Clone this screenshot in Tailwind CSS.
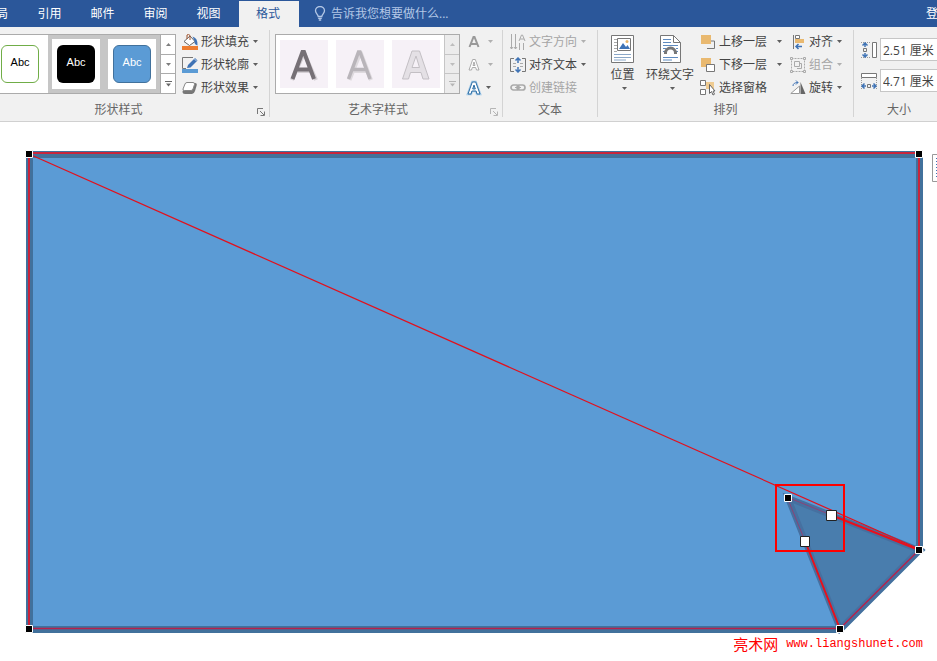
<!DOCTYPE html>
<html lang="zh-CN">
<head>
<meta charset="utf-8">
<title>格式</title>
<script src="https://cdn.jsdelivr.net/npm/@tailwindcss/browser@4"></script>
</head>
<body class="flex min-h-screen flex-col overflow-x-hidden bg-white font-['Open_Sans','Noto_Sans_CJK_SC',sans-serif] text-xs leading-4 text-[#444444]">
<svg class="hidden">
  <symbol id="caret" viewBox="0 0 5 3"><path d="M0 0h5L2.500 3z" fill="currentColor" opacity=".85"/></symbol>
  <symbol id="more" viewBox="0 0 7 6"><path d="M0 .5h7" stroke="currentColor"/><path d="M1 2.500h5L3.500 5.500z" fill="currentColor"/></symbol>
  <symbol id="launcher" viewBox="0 0 8 8"><path d="M.5 6V.5H6M3 3l4 4M7.500 3.500v4h-4" fill="none" stroke="currentColor"/></symbol>
</svg>

<nav class="flex h-[27px] items-stretch overflow-hidden bg-[#2b579a] text-white">
  <a href="#" class="-ml-1 flex w-7 items-center">局</a>
  <a href="#" class="flex w-[53px] items-center justify-center pr-0.5">引用</a>
  <a href="#" class="flex w-[53px] items-center justify-center pr-0.5">邮件</a>
  <a href="#" class="flex w-[53px] items-center justify-center pr-0.5">审阅</a>
  <a href="#" class="flex w-[53px] items-center justify-center pr-0.5">视图</a>
  <a href="#" class="mt-px ml-[3px] flex w-[60px] items-center justify-center bg-[#f1f1f1] pr-0.5 pb-px text-[#2b579a]">格式</a>
  <button class="ml-[15px] flex items-center gap-[5px] text-[#b3c7e6]">
    <svg class="h-[15px] w-3" viewBox="0 0 12 15" fill="none" stroke="currentColor" stroke-width="1.300"><path d="M4.200 10.500C4.200 8.500 1.500 7.500 1.500 4.800a4.500 4.300 0 0 1 9 0c0 2.700-2.700 3.700-2.700 5.700zM4.200 12.300h3.600M4.800 14h2.400"/></svg>
    <span>告诉我您想要做什么...</span>
  </button>
  <a href="#" class="ml-auto flex w-[11px] items-center overflow-hidden whitespace-nowrap">登</a>
</nav>

<header class="flex h-[95px] overflow-hidden border-b border-[#d0d0d0] bg-[#f1f1f1] whitespace-nowrap">
  <section class="mt-[3px] mb-1 flex w-[270px] shrink-0 flex-col border-r border-[#d4d4d4]">
    <div class="flex h-[69px] shrink-0">
      <div class="mt-1 flex h-[60px] w-[176px] shrink-0 border border-l-0 border-[#ababab] bg-white font-['Liberation_Sans',sans-serif] text-[11px]">
        <div class="flex w-[161px] justify-end overflow-hidden">
          <button class="flex h-[58px] w-14 shrink-0 items-center justify-center"><span class="flex size-[38px] items-center justify-center rounded-md border border-[#70ad47] pb-1 text-black">Abc</span></button>
          <button class="flex h-[58px] w-14 shrink-0 items-center justify-center border-4 border-[#c6c6c6]"><span class="flex size-[38px] items-center justify-center rounded-md bg-black pb-1 text-white">Abc</span></button>
          <button class="flex h-[58px] w-14 shrink-0 items-center justify-center border-4 border-[#c6c6c6]"><span class="flex size-[38px] items-center justify-center rounded-md border border-[#41719c] bg-[#5b9bd5] pb-1 text-white">Abc</span></button>
        </div>
        <div class="flex w-[15px] flex-col divide-y divide-[#ababab] border-l border-[#ababab] text-[#666666]">
          <button aria-label="上一行" class="flex flex-1 items-center justify-center"><svg class="h-[3px] w-[5px] rotate-180"><use href="#caret"/></svg></button>
          <button aria-label="下一行" class="flex flex-1 items-center justify-center"><svg class="h-[3px] w-[5px]"><use href="#caret"/></svg></button>
          <button aria-label="其他" class="flex flex-1 items-center justify-center"><svg class="h-[6px] w-[7px]"><use href="#more"/></svg></button>
        </div>
      </div>
      <div class="ml-1.5 flex flex-col">
        <button class="flex h-[23px] items-center gap-[3px]">
          <svg class="size-4" viewBox="0 0 16 16"><path d="M2 7.500l6-5.500 5 5.500-5.500 4z" fill="#fff" stroke="#666"/><path d="M5 5V1Q6.500-.5 8 1.500V6" fill="none" stroke="#a0522d"/><path d="M10.500 2.500q5.500 1.500 5 9-3.500-1-3-4.500z" fill="#3f73b5"/><path d="M0 12h16v4H0z" fill="#ed7d31"/></svg>
          <span>形状填充</span><svg class="ml-px h-[3px] w-[5px]"><use href="#caret"/></svg>
        </button>
        <button class="flex h-[23px] items-center gap-[3px]">
          <svg class="size-4" viewBox="0 0 16 16"><path d="M11 .5H.5v11H4" fill="none" stroke="#777"/><path d="M6 8l7-7 2.500 2.500-7 7L5 11z" fill="#3f73b5"/><path d="M12 1.500l2.500 2.500" stroke="#fff" stroke-width=".7"/><path d="M0 12h16v4H0z" fill="#5b9bd5"/></svg>
          <span>形状轮廓</span><svg class="ml-px h-[3px] w-[5px]"><use href="#caret"/></svg>
        </button>
        <button class="flex h-[23px] items-center gap-[3px]">
          <svg class="size-4" viewBox="0 0 16 16"><path d="M5 3h8q2.500 0 1.500 3L13 11q-1 3-3 3H3q-2.500 0-2.500-2.500z" fill="#777"/><path d="M5 2.500h6q2 0 1.500 2L11 9q-.6 1.500-2 1.500H2.500Q.5 10.500 1 9L3 4q.5-1.500 2-1.500z" fill="#fff" stroke="#888"/></svg>
          <span>形状效果</span><svg class="ml-px h-[3px] w-[5px]"><use href="#caret"/></svg>
        </button>
      </div>
    </div>
    <div class="flex items-center pt-[3px]"><h2 class="flex-1 text-center text-[#666666]"><span class="pr-7">形状样式</span></h2><button aria-label="形状样式设置" class="mt-1 -ml-2 pr-1 text-[#777777]"><svg class="size-2"><use href="#launcher"/></svg></button></div>
  </section>

  <section class="mt-[3px] mb-1 flex w-[233px] shrink-0 flex-col border-r border-[#d4d4d4]">
    <div class="flex h-[69px] shrink-0">
      <div class="mt-1 ml-[5px] flex h-[60px] w-[185px] shrink-0 border border-[#ababab] bg-white font-['Open_Sans',sans-serif]">
        <div class="flex w-[169px] items-center gap-2 pl-1">
          <button aria-label="填充 深灰" class="flex size-12 shrink-0 items-center justify-center bg-[#f6f1f7]"><svg class="size-9" viewBox="0 0 36 36"><path d="M6 34L17.500 8h1L30 34M11.500 25h13" fill="none" stroke="#d5d0d5" stroke-width="4"/><path d="M6.500 33L16.500 6h1.500L28 33M10 23.500h15" fill="none" stroke="#767076" stroke-width="4"/></svg></button>
          <button aria-label="填充 浅灰" class="flex size-12 shrink-0 items-center justify-center bg-[#f6f1f7]"><svg class="size-9" viewBox="0 0 36 36"><path d="M7.500 34L18 7.500h1L29 34M11.500 25h15" fill="none" stroke="#dedade" stroke-width="4"/><path d="M6.500 33L16.500 6h1.500L28 33M10 23.500h15" fill="none" stroke="#b9b5ba" stroke-width="3.500"/></svg></button>
          <button aria-label="轮廓" class="flex size-12 shrink-0 items-center justify-center bg-[#f6f1f7]"><svg class="size-9" viewBox="0 0 36 36"><path d="M4.500 33L14 5h7.500L31 33h-6l-2-6.500H12.500L10.500 33zM14 21.500h7.500L18 10z" fill="#e4e0e5" stroke="#c3bfc4"/></svg></button>
        </div>
        <div class="flex w-[15px] flex-col divide-y divide-[#c6c6c6] border-l border-[#c6c6c6] bg-[#ececec] text-[#b5b5b5]">
          <button aria-label="上一行" class="flex flex-1 items-center justify-center"><svg class="h-[3px] w-[5px] rotate-180"><use href="#caret"/></svg></button>
          <button aria-label="下一行" class="flex flex-1 items-center justify-center"><svg class="h-[3px] w-[5px]"><use href="#caret"/></svg></button>
          <button aria-label="其他" class="flex flex-1 items-center justify-center"><svg class="h-[6px] w-[7px]"><use href="#more"/></svg></button>
        </div>
      </div>
      <div class="ml-1.5 flex flex-col text-[#a5a5a5]">
        <button aria-label="文本填充" class="flex h-[23px] items-center gap-1.5"><svg class="size-4" viewBox="0 0 16 16"><path d="M3.500 13L7.500 3h1l4 10M5 10h6" fill="none" stroke="#999" stroke-width="2"/></svg><svg class="h-[3px] w-[5px]"><use href="#caret"/></svg></button>
        <button aria-label="文本轮廓" class="flex h-[23px] items-center gap-1.5"><svg class="size-4" viewBox="0 0 16 16"><path d="M3 13L6.700 2.500h2.600L13 13h-2.500l-.8-2.500H6.300L5.500 13zM7 8.500h2L8 5z" fill="#fff" stroke="#999" stroke-width=".8"/></svg><svg class="h-[3px] w-[5px]"><use href="#caret"/></svg></button>
        <button aria-label="文本效果" class="flex h-[23px] items-center gap-1 text-[#444444]"><svg class="size-4" viewBox="0 0 16 16"><path d="M2 14L6.300 2h3.400L14 14h-3l-.9-3H5.900L5 14zM6.700 9h2.600L8 5z" fill="#fff" stroke="#a5cbe8" stroke-width="2.500"/><path d="M2 14L6.300 2h3.400L14 14h-3l-.9-3H5.900L5 14zM6.700 9h2.600L8 5z" fill="#fff" stroke="#2c6da4"/></svg><svg class="h-[3px] w-[5px]"><use href="#caret"/></svg></button>
      </div>
    </div>
    <div class="flex items-center pt-[3px]"><h2 class="flex-1 text-center text-[#666666]"><span class="pr-3">艺术字样式</span></h2><button aria-label="艺术字样式设置" class="mt-1 -ml-2 pr-1 text-[#b5b5b5]"><svg class="size-2"><use href="#launcher"/></svg></button></div>
  </section>

  <section class="mt-[3px] mb-1 flex w-[95px] shrink-0 flex-col border-r border-[#d4d4d4]">
    <div class="flex h-[69px] shrink-0 flex-col pl-[7px]">
      <button class="flex h-[23px] items-center gap-[3px] text-[#a5a5a5]">
        <svg class="size-4" viewBox="0 0 16 16" fill="none" stroke="#aaa"><path d="M1.500 0v15M0 13l1.500 2L3 13M5.500 0v15M4 13l1.500 2L7 13M9 7l2.500-6h1L15 7M10 5h4M9.500 9v7M13.500 9v7" /></svg>
        <span>文字方向</span><svg class="ml-px h-[3px] w-[5px]"><use href="#caret"/></svg>
      </button>
      <button class="flex h-[23px] items-center gap-[3px]">
        <svg class="size-4" viewBox="0 0 16 16" fill="none"><path d="M4 1.500H.5v13H4M12 1.500h3.500v13H12" stroke="#777"/><path d="M3 6.500h3M10 6.500h3M3 9.500h3M10 9.500h3" stroke="#aaa"/><path d="M8 1v5M5.500 3.500L8 1l2.500 2.500M8 15v-5M5.500 12.500L8 15l2.500-2.500" stroke="#3f73b5" stroke-width="1.500"/></svg>
        <span>对齐文本</span><svg class="ml-px h-[3px] w-[5px]"><use href="#caret"/></svg>
      </button>
      <button class="flex h-[23px] items-center gap-[3px] text-[#a5a5a5]">
        <svg class="size-4" viewBox="0 0 16 16" fill="none" stroke="#aaa" stroke-width="1.700"><rect x="1" y="5" width="8" height="5" rx="2.500"/><rect x="7" y="5" width="8" height="5" rx="2.500"/><path d="M5 7.500h6" stroke-width="1"/></svg>
        <span>创建链接</span>
      </button>
    </div>
    <h2 class="pt-[3px] text-center text-[#666666]">文本</h2>
  </section>

  <section class="mt-[3px] mb-1 flex w-64 shrink-0 flex-col border-r border-[#d4d4d4]">
    <div class="flex h-[69px] shrink-0">
      <button class="flex w-[49px] flex-col items-center pt-[5px]">
        <svg class="h-7 w-[23px]" viewBox="0 0 23 28" fill="none"><path d="M.5.5h22v27H.5z" fill="#fff" stroke="#777"/><path d="M3 4.500h3M3 7.500h3M3 10.500h3M3 13.500h3M3 16.500h3" stroke="#aaa"/><path d="M3 19.500h17M3 22.500h17M3 25h12" stroke="#8aa7c8"/><path d="M6.500 3.500h13v12h-13z" fill="#fff" stroke="#777"/><path d="M8 14l4-6 3 4 1.500-2 2.500 4z" fill="#3f73b5"/><circle cx="16" cy="6.500" r="1.500" fill="#e8b66a"/></svg>
        <span class="mt-1">位置</span><svg class="mt-1 ml-1 h-[3px] w-[5px]"><use href="#caret"/></svg>
      </button>
      <button class="flex w-[46px] flex-col items-center pt-[5px]">
        <svg class="h-7 w-[21px]" viewBox="0 0 21 28" fill="none"><path d="M.5.5h13l7 7v20H.5z" fill="#fff" stroke="#777"/><path d="M13.500.5v7h7" stroke="#777"/><path d="M3 4.500h8M3 7.500h8M3 10.500h15M3 13.500h3M16 13.500h2M3 16.500h2M16 16.500h2M3 22.500h15M3 25h9" stroke="#5f8bc0"/><path d="M5.500 19v-1a5 5 0 0 1 10 0v1" stroke="#777" stroke-width="3"/></svg>
        <span class="mt-1">环绕文字</span><svg class="mt-1 ml-1 h-[3px] w-[5px]"><use href="#caret"/></svg>
      </button>
      <div class="ml-[7px] flex w-[90px] flex-col">
        <button class="flex h-[23px] items-center gap-[3px]">
          <svg class="size-4" viewBox="0 0 16 16"><path d="M7 14.500h7.500V7H11" fill="none" stroke="#777"/><path d="M1 1h10v9H1z" fill="#e9b970"/></svg>
          <span>上移一层</span><svg class="ml-[7px] h-[3px] w-[5px]"><use href="#caret"/></svg>
        </button>
        <button class="flex h-[23px] items-center gap-[3px]">
          <svg class="size-4" viewBox="0 0 16 16"><path d="M1 1h10v9H1z" fill="#e9b970"/><path d="M6.500 7.500h8v7h-8z" fill="#fff" stroke="#777"/></svg>
          <span>下移一层</span><svg class="ml-[7px] h-[3px] w-[5px]"><use href="#caret"/></svg>
        </button>
        <button class="flex h-[23px] items-center gap-[3px]">
          <svg class="size-4" viewBox="0 0 16 16"><path d="M6 2h8v7H6z" fill="#efcb91"/><path d="M.5.5h5v5h-5zM.5 9.500h5v5h-5z" fill="#fff" stroke="#777"/><path d="M9.500 4.500v9l2-2 1.500 3.500 1.500-.8-1.500-3.200H15z" fill="#fff" stroke="#666"/></svg>
          <span>选择窗格</span>
        </button>
      </div>
      <div class="flex flex-col">
        <button class="flex h-[23px] items-center gap-[3px]">
          <svg class="size-4" viewBox="0 0 16 16" fill="none"><path d="M3.500 1v14" stroke="#777"/><path d="M5.500 1.500h4v3h-4z" fill="#fff" stroke="#777"/><path d="M5 5h9v4H5z" fill="#e9b970"/><path d="M6 12.500h6M8.500 10L6 12.500 8.500 15" stroke="#3f73b5" stroke-width="1.500"/></svg>
          <span>对齐</span><svg class="ml-px h-[3px] w-[5px]"><use href="#caret"/></svg>
        </button>
        <button class="flex h-[23px] items-center gap-[3px] text-[#a5a5a5]">
          <svg class="size-4" viewBox="0 0 16 16" fill="none" stroke="#aaa"><path d="M1.500 1.500h13v13h-13z" stroke-dasharray="2 1"/><path d="M4.500 4.500h5v5h-5zM7 11.500h4.500V6.500H9.500"/><path d="M.5.500h2v2h-2zM13.500.500h2v2h-2zM.5 13.500h2v2h-2zM13.500 13.500h2v2h-2z" fill="#f1f1f1"/></svg>
          <span>组合</span><svg class="ml-px h-[3px] w-[5px]"><use href="#caret"/></svg>
        </button>
        <button class="flex h-[23px] items-center gap-[3px]">
          <svg class="size-4" viewBox="0 0 16 16" fill="none"><path d="M.8 13.500h8.700V6z" fill="#fff" stroke="#999"/><path d="M10.500 2L15.500 14h-5z" fill="#666"/><path d="M3 6q0-3.500 5-3.500M6 .5l2 2-2 2" stroke="#3f73b5"/></svg>
          <span>旋转</span><svg class="ml-px h-[3px] w-[5px]"><use href="#caret"/></svg>
        </button>
      </div>
    </div>
    <h2 class="pt-[3px] text-center text-[#666666]">排列</h2>
  </section>

  <section class="mt-[3px] mb-1 flex min-w-0 flex-1 flex-col pl-[7px]">
    <div class="flex h-[69px] shrink-0 flex-col gap-2 pt-2">
      <div class="flex h-[23px] shrink-0 items-center gap-[3px]">
        <label for="shape-height" aria-label="高度" class="shrink-0"><svg class="size-4" viewBox="0 0 16 16" fill="none"><path d="M11.500.5h4v15h-4z" fill="#fff" stroke="#777"/><path d="M0 .5h10M0 15.500h10" stroke="#999" stroke-dasharray="1 1"/><path d="M2.500 6.500h3v3h-3z" stroke="#777"/><path d="M4 1v4M1.500 3.500L4 1l2.500 2.500M4 15v-4M1.500 12.500L4 15l2.500-2.500" stroke="#3f73b5" stroke-width="1.500"/></svg></label>
        <input id="shape-height" value="2.51 厘米" class="h-[23px] min-w-0 flex-1 border border-r-0 border-[#c6c6c6] bg-white pl-0.5">
      </div>
      <div class="flex h-[23px] shrink-0 items-center gap-[3px]">
        <label for="shape-width" aria-label="宽度" class="shrink-0"><svg class="size-4" viewBox="0 0 16 16" fill="none"><path d="M.5.5h15v4H.5z" fill="#fff" stroke="#777"/><path d="M.5 5v11M15.500 5v11" stroke="#999" stroke-dasharray="1 1"/><path d="M6.500 11.500h3v3h-3z" stroke="#777"/><path d="M1 13h4M3.500 10.500L1 13l2.500 2.500M15 13h-4M12.500 10.500L15 13l-2.500 2.500" stroke="#3f73b5" stroke-width="1.500"/></svg></label>
        <input id="shape-width" value="4.71 厘米" class="h-[23px] min-w-0 flex-1 border border-r-0 border-[#c6c6c6] bg-white pl-0.5">
      </div>
    </div>
    <h2 class="pt-[3px] text-center text-[#666666]">大小</h2>
  </section>
</header>

<main class="flex-1 overflow-hidden">
  <svg class="block w-full" viewBox="0 122 937 512" role="img" aria-label="折角形顶点编辑">
    <path d="M29.500 154.500H919.500V550L840 629.500H29.500z" fill="#5b9bd5" stroke="#41719c" stroke-width="7"/>
    <path d="M788 498L919 550 840 629z" fill="#497dad" stroke="#4670a0" stroke-width="6"/>
    <path d="M29 629V153H919V549" fill="none" stroke="#c8253c" stroke-width="2"/>
    <path d="M29.500 628.500H840L919 550" fill="none" stroke="#b8204a" stroke-width="1.300"/>
    <path d="M787 497L831 515M787 497L805 541" stroke="#8a4478" fill="none"/>
    <path d="M29 154L919 549" stroke="#e3101c" stroke-width="1.200"/>
    <path d="M831 515L919 550M805 541L840 629" stroke="#e8101c" stroke-width="2"/>
    <path d="M776 485h68v66h-68z" fill="none" stroke="#ff0000" stroke-width="2"/>
    <g fill="#000" stroke="#fff">
      <path d="M25.500 150.500h7v7h-7zM915.500 150.500h7v7h-7zM25.500 625.500h7v7h-7zM836.500 625.500h7v7h-7zM915.500 546.500h7v7h-7zM784.500 494.500h7v7h-7z"/>
    </g>
    <path d="M826.500 510.500h10v10h-10zM800.500 536.500h9v10h-9z" fill="#fff" stroke="#222"/>
    <path d="M923.500 548l2 2-2 2z" fill="#41719c"/>
    <path d="M940 154.500h-7.500v27h7.500" fill="#fff" stroke="#999"/>
    <path d="M936.500 158v20" stroke="#3f73b5" stroke-dasharray="1 2"/>
  </svg>
  <p class="flex items-center justify-end gap-2 pr-3.5 text-[#ff0000]"><span class="font-['Noto_Sans_CJK_SC',sans-serif] text-[15px] leading-5">亮术网</span><span class="font-['Liberation_Mono',monospace] text-xs">www.liangshunet.com</span></p>
</main>
</body>
</html>
